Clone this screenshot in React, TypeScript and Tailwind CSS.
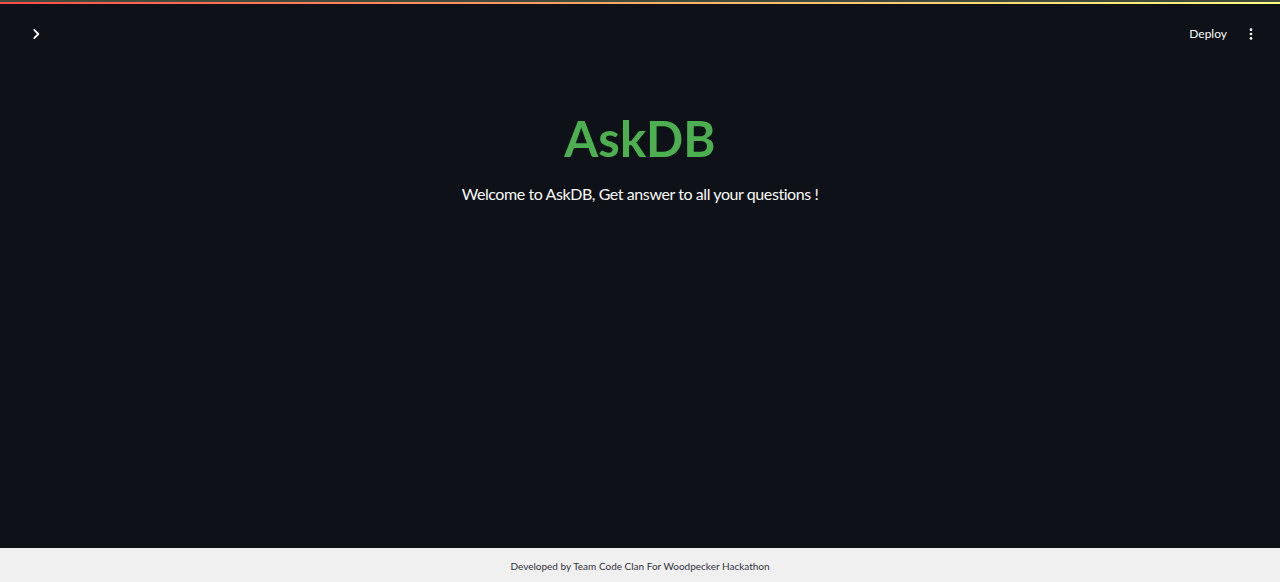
import React from 'react'

// Streamlit-like landing page for AskDB
export default function App() {
  return (
    <div className="w-[1280px] h-[582px] flex flex-col bg-[#0e1117] overflow-hidden" style={{ fontFamily: 'Lato, "Open Sans", sans-serif' }}>
      {/* top decoration */}
      <div className="h-[2px] bg-[#3f4a3d]" />
      <div className="h-[2px] bg-gradient-to-r from-[#ff4b4b] to-[#fffd80]" />

      {/* header */}
      <div className="h-[58px] flex items-center justify-between pl-[29px] pr-[22px] pt-[2px]">
        <svg width="14" height="14" viewBox="0 0 24 24" fill="none" stroke="#fafafa" strokeWidth="3.2" strokeLinecap="round" strokeLinejoin="round">
          <path d="M9 5l7 7-7 7" />
        </svg>
        <div className="flex items-center gap-[17px]">
          <span className="text-[12px] text-[#fafafa]">Deploy</span>
          <svg width="14" height="14" viewBox="0 0 24 24" fill="#fafafa">
            <circle cx="12" cy="4.5" r="2.3" />
            <circle cx="12" cy="12" r="2.3" />
            <circle cx="12" cy="19.5" r="2.3" />
          </svg>
        </div>
      </div>

      {/* main */}
      <div className="flex-1 flex flex-col items-center">
        <h1 className="mt-[44px] text-[49px] leading-[64px] font-bold text-[#4caf50]">AskDB</h1>
        <p className="mt-[12px] text-[16px] leading-[24px] tracking-[-0.42px] text-[#fafafa]">Welcome to AskDB, Get answer to all your questions !</p>
      </div>

      {/* footer */}
      <div className="h-[34px] bg-[#f0f0f0] flex items-center justify-center pt-[3px]">
        <span className="text-[10px] text-[#31333f]">Developed by Team Code Clan For Woodpecker Hackathon</span>
      </div>
    </div>
  )
}
